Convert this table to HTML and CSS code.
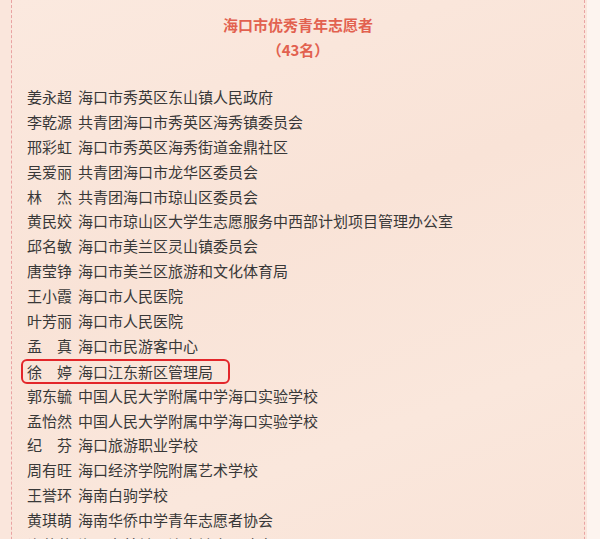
FILE: index.html
```html
<!DOCTYPE html>
<html lang="zh-CN">
<head>
<meta charset="utf-8">
<link rel="stylesheet" href="styles.css">
</head>
<body>
<div class="page">
  <div class="card">
    <div class="heading">
      <div class="title">海口市优秀青年志愿者</div>
      <div class="subtitle">（43名）</div>
    </div>
    <ul class="list">
      <li><span class="name">姜永超</span>海口市秀英区东山镇人民政府</li>
      <li><span class="name">李乾源</span>共青团海口市秀英区海秀镇委员会</li>
      <li><span class="name">邢彩虹</span>海口市秀英区海秀街道金鼎社区</li>
      <li><span class="name">吴爱丽</span>共青团海口市龙华区委员会</li>
      <li><span class="name">林　杰</span>共青团海口市琼山区委员会</li>
      <li><span class="name">黄民姣</span>海口市琼山区大学生志愿服务中西部计划项目管理办公室</li>
      <li><span class="name">邱名敏</span>海口市美兰区灵山镇委员会</li>
      <li><span class="name">唐莹铮</span>海口市美兰区旅游和文化体育局</li>
      <li><span class="name">王小霞</span>海口市人民医院</li>
      <li><span class="name">叶芳丽</span>海口市人民医院</li>
      <li><span class="name">孟　真</span>海口市民游客中心</li>
      <li><span class="hl"><span class="name">徐　婷</span>海口江东新区管理局</span></li>
      <li><span class="name">郭东毓</span>中国人民大学附属中学海口实验学校</li>
      <li><span class="name">孟怡然</span>中国人民大学附属中学海口实验学校</li>
      <li><span class="name">纪　芬</span>海口旅游职业学校</li>
      <li><span class="name">周有旺</span>海口经济学院附属艺术学校</li>
      <li><span class="name">王誉环</span>海南白驹学校</li>
      <li><span class="name">黄琪萌</span>海南华侨中学青年志愿者协会</li>
      <li><span class="name">许莹莹</span>海口市美兰区演丰镇人民政府</li>
    </ul>
  </div>
</div>
</body>
</html>
```

FILE: styles.css
```css
html, body {
  margin: 0;
  padding: 0;
}
body {
  background: #fdf5f0;
  font-family: "Noto Sans CJK SC", "Noto Sans", sans-serif;
  overflow: hidden;
}
.page {
  width: 600px;
  height: 539px;
  overflow: hidden;
  background: linear-gradient(90deg, #fae6dc 0, #fae6dc 587px, #fdf4ef 587px);
}
.card {
  margin-left: 11px;
  width: 574px;
  min-height: 600px;
  border-left: 1px dashed #e9a3a3;
  border-right: 1px dashed #e9a3a3;
  background: linear-gradient(160deg, #fbe9df 0%, #f9e3d7 40%, #fae7dc 70%, #f9e2d6 100%);
  padding: 14px 0 0 15px;
  box-sizing: border-box;
}
.heading {
  text-align: center;
  color: #e2614f;
  font-weight: 700;
  font-size: 15px;
  line-height: 22px;
  padding-right: 15px;
}
.subtitle {
  margin-top: 3px;
}
.list {
  list-style: none;
  margin: 24px 0 0;
  padding: 0;
  color: #383838;
  font-size: 15px;
  line-height: 24.9px;
}
.list li {
  height: 24.9px;
  white-space: nowrap;
}
.name {
  display: inline-block;
  width: 45px;
  margin-right: 6px;
}
.hl {
  display: inline-block;
  height: 21px;
  line-height: 21px;
  margin-left: -4.5px;
  padding: 0 14.5px 0 4.5px;
  outline: 2.5px solid #e3262a;
  border-radius: 4px;
  vertical-align: top;
  margin-top: 2px;
}
```
